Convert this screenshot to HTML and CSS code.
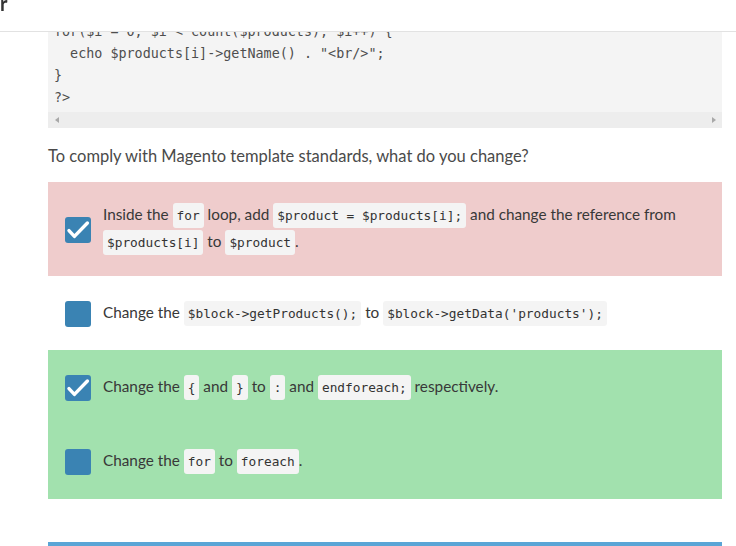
FILE: index.html
```html
<!DOCTYPE html>
<html lang="en">
<head>
<meta charset="utf-8">
<title>Question</title>
<link rel="stylesheet" href="styles.css">
</head>
<body>
<header class="topbar">
  <div class="topbar-title">r</div>
</header>
<main class="page">
  <div class="code-box">
<pre class="code">for($i = 0; $i &lt; count($products); $i++) {
  echo $products[i]-&gt;getName() . "&lt;br/&gt;";
}
?&gt;</pre>
    <div class="hscroll">
      <span class="arrow arrow-left"></span>
      <span class="arrow arrow-right"></span>
    </div>
  </div>

  <p class="question">To comply with Magento template standards, what do you change?</p>

  <ul class="answers">
    <li class="answer answer-wrong">
      <span class="checkbox checked"><svg viewBox="0 0 26 26" width="26" height="26"><path d="M4 13.6 L9.4 19.4 L22.4 6" fill="none" stroke="#fff" stroke-width="3.4" stroke-linecap="round" stroke-linejoin="round"/></svg></span>
      <span class="answer-text">Inside the <code class="chip">for</code> loop, add <code class="chip">$product = $products[i];</code> and change the reference from <code class="chip">$products[i]</code> to <code class="chip">$product</code>.</span>
    </li>
    <li class="answer">
      <span class="checkbox"></span>
      <span class="answer-text">Change the <code class="chip">$block-&gt;getProducts();</code> to <code class="chip">$block-&gt;getData('products');</code></span>
    </li>
    <li class="answer answer-right">
      <span class="checkbox checked"><svg viewBox="0 0 26 26" width="26" height="26"><path d="M4 13.6 L9.4 19.4 L22.4 6" fill="none" stroke="#fff" stroke-width="3.4" stroke-linecap="round" stroke-linejoin="round"/></svg></span>
      <span class="answer-text">Change the <code class="chip">{</code> and <code class="chip">}</code> to <code class="chip">:</code> and <code class="chip">endforeach;</code> respectively.</span>
    </li>
    <li class="answer answer-right">
      <span class="checkbox"></span>
      <span class="answer-text">Change the <code class="chip">for</code> to <code class="chip">foreach</code>.</span>
    </li>
  </ul>

  <div class="bottom-rule"></div>
</main>
</body>
</html>
```
FILE: styles.css
```css
html, body {
  margin: 0;
  padding: 0;
  background: #ffffff;
}

body {
  font-family: "Lato", "Liberation Sans", sans-serif;
  color: #3b3b3b;
  overflow: hidden;
  height: 546px;
}

.topbar {
  position: fixed;
  top: 0;
  left: 0;
  right: 0;
  height: 31px;
  background: #ffffff;
  border-bottom: 1px solid #e2e2e2;
  z-index: 10;
}

.topbar-title {
  font-size: 20px;
  line-height: 6px;
  font-weight: 700;
  color: #333333;
}

.page {
  margin: 0 14px 0 48px;
  padding-top: 16px;
}

.code-box {
  background: #f4f4f4;
}

.code {
  margin: 0;
  padding: 5px 6px 3px;
  font-family: "DejaVu Sans Mono", "Liberation Mono", monospace;
  font-size: 13.4px;
  line-height: 22px;
  color: #4e4e4e;
  white-space: pre;
  overflow: hidden;
}

.hscroll {
  height: 16px;
  background: #ededed;
  display: flex;
  align-items: center;
  justify-content: space-between;
  padding: 0 6px 0 7px;
}

.arrow {
  width: 0;
  height: 0;
  border-top: 3.5px solid transparent;
  border-bottom: 3.5px solid transparent;
}

.arrow-left {
  border-right: 4px solid #a8a8a8;
}

.arrow-right {
  border-left: 4px solid #a8a8a8;
}

.question {
  margin: 16px 0 14px;
  font-size: 16.5px;
  line-height: 24px;
  color: #4a4a4a;
}

.answers {
  list-style: none;
  margin: 0;
  padding: 0;
}

.answer {
  display: flex;
  align-items: center;
  min-height: 34.3px;
  padding: 19px 17px 21px 17px;
  font-size: 15.3px;
  line-height: 26px;
  color: #383838;
}

.answer-wrong {
  background: #efcccc;
}

.answer-right {
  background: #a2e1ae;
}

.checkbox {
  flex: 0 0 auto;
  width: 26px;
  height: 26px;
  margin-top: 3px;
  border-radius: 3px;
  background: #3a83b3;
  display: flex;
  align-items: center;
  justify-content: center;
}

.checkbox svg {
  display: block;
}

.answer-text {
  margin-left: 12px;
}

.chip {
  display: inline-block;
  font-family: "DejaVu Sans Mono", "Liberation Mono", monospace;
  font-size: 12.8px;
  line-height: 17px;
  padding: 4px;
  background: #f4f4f4;
  color: #333333;
  border-radius: 3px;
}

.bottom-rule {
  margin-top: 43px;
  height: 6px;
  background: #5aa5d6;
}
```
